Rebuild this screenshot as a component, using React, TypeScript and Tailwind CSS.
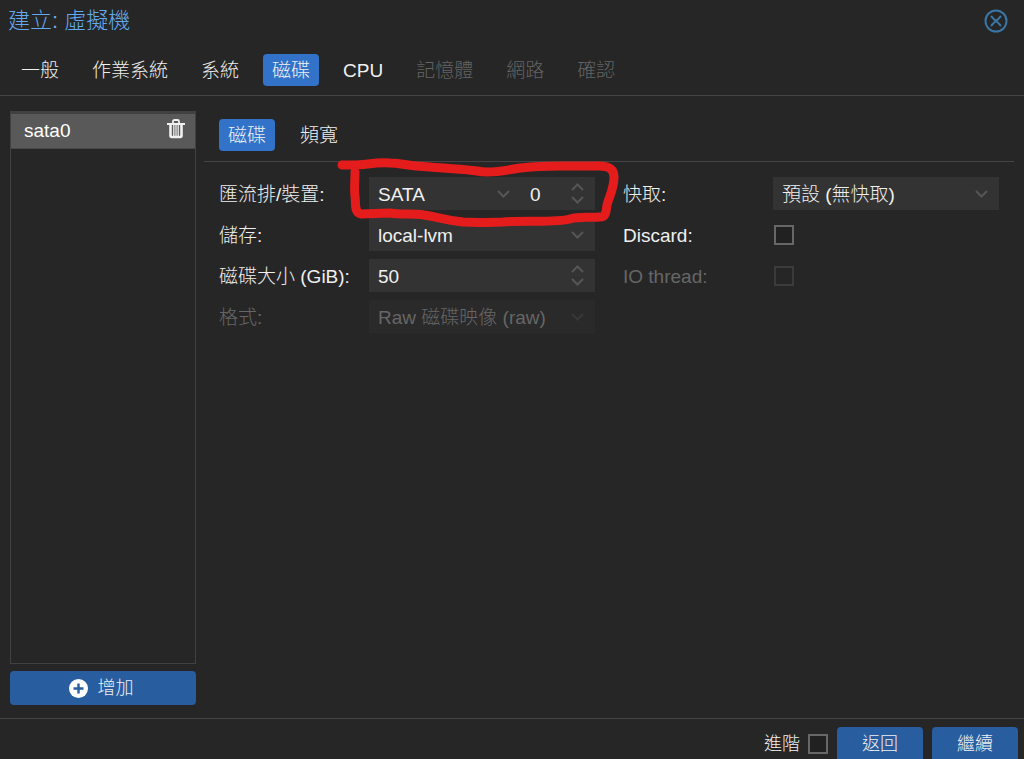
import { useState } from "react";
import type { ReactNode } from "react";

const tabs = [
  { label: "一般" },
  { label: "作業系統" },
  { label: "系統" },
  { label: "磁碟" },
  { label: "CPU" },
  { label: "記憶體", disabled: true },
  { label: "網路", disabled: true },
  { label: "確認", disabled: true },
];

const fieldText = "h-[33px] w-full min-w-0 appearance-none rounded-none bg-transparent pt-0.5 pl-[9px] outline-none";

function Tab({ label, active, disabled, onClick }: { label: string; active: boolean; disabled?: boolean; onClick: () => void }) {
  return (
    <button
      type="button"
      role="tab"
      aria-selected={active}
      disabled={disabled}
      onClick={onClick}
      className={`h-8 rounded-sm px-[9px] pt-0.5 whitespace-nowrap ${active ? "bg-[#3273c9] text-[#f0f0f0]" : "disabled:text-[#636363]"}`}
    >
      {label}
    </button>
  );
}

function Chevron({ up = false }: { up?: boolean }) {
  return (
    <svg width="13" height="8" viewBox="0 0 13 8" fill="none" stroke="currentColor" strokeWidth="2" aria-hidden="true">
      <path d={up ? "M1 7 L6.5 1.5 L12 7" : "M1 1 L6.5 6.5 L12 1"} />
    </svg>
  );
}

function TrashIcon() {
  return (
    <svg width="18" height="20" viewBox="0 0 18 20" fill="none" stroke="currentColor" aria-hidden="true">
      <path d="M6 4 V2.5 Q6 1 7.5 1 H10.5 Q12 1 12 2.5 V4" strokeWidth="1.8" />
      <path d="M0 5 H18" strokeWidth="2" />
      <path d="M3.5 5 V17 Q3.5 18 4.7 18 H13.3 Q14.5 18 14.5 17 V5" strokeWidth="2.6" />
      <path d="M6.8 6 V17 M9 6 V17 M11.2 6 V17" strokeWidth="1.3" />
    </svg>
  );
}

function PlusCircleIcon() {
  return (
    <svg width="19" height="19" viewBox="0 0 19 19" aria-hidden="true">
      <circle cx="9.5" cy="9.5" r="9.5" fill="#ffffff" />
      <path d="M9.5 4.5 V14.5 M4.5 9.5 H14.5" stroke="#285d9f" strokeWidth="2.4" />
    </svg>
  );
}

function Combo({ id, value, disabled }: { id: string; value: string; disabled?: boolean }) {
  return (
    <div className={`relative min-w-0 flex-1 ${disabled ? "bg-[#2a2a2a] text-[#666666]" : "bg-[#333333]"}`}>
      <select id={id} disabled={disabled} className={`${fieldText} block pr-8 disabled:opacity-100`}>
        <option>{value}</option>
      </select>
      <span className={`pointer-events-none absolute inset-y-0 right-[11px] flex items-center ${disabled ? "text-[#383838]" : "text-[#565656]"}`}>
        <Chevron />
      </span>
    </div>
  );
}

function Spinner({ id, initial, label, className }: { id: string; initial: number; label?: string; className: string }) {
  const [value, setValue] = useState(String(initial));
  const step = (n: number) => setValue(String(Math.max(0, (Number(value) || 0) + n)));
  return (
    <div className={`flex min-w-0 bg-[#333333] ${className}`}>
      <input id={id} aria-label={label} inputMode="numeric" value={value} onChange={(e) => setValue(e.target.value)} className={fieldText} />
      <div className="flex shrink-0 flex-col justify-center gap-[5px] pr-[11px] text-[#565656]">
        <button type="button" aria-label="+1" onClick={() => step(1)}>
          <Chevron up />
        </button>
        <button type="button" aria-label="-1" onClick={() => step(-1)}>
          <Chevron />
        </button>
      </div>
    </div>
  );
}

function Row({ id, label, dim, children }: { id: string; label: string; dim?: boolean; children: ReactNode }) {
  return (
    <div className="flex h-[33px] items-center">
      <label htmlFor={id} className={`w-[150px] shrink-0 pt-0.5 whitespace-nowrap ${dim ? "text-[#666666]" : ""}`}>
        {label}
      </label>
      {children}
    </div>
  );
}

function Checkbox({ id, disabled }: { id: string; disabled?: boolean }) {
  return (
    <input
      id={id}
      type="checkbox"
      disabled={disabled}
      className="ml-px size-5 appearance-none border-2 border-[#676767] bg-[#212121] checked:bg-[#3273c9] disabled:border-[#3b3b3b] disabled:bg-[#262626]"
    />
  );
}

function Highlight() {
  return (
    <svg
      className="pointer-events-none absolute -top-[19px] -left-[33px] z-10"
      width="284"
      height="70"
      viewBox="0 0 284 70"
      fill="none"
      stroke="#e51c1c"
      strokeWidth="9"
      strokeLinecap="round"
      strokeLinejoin="round"
      aria-hidden="true"
    >
      <path d="M6 7 H17 C30 7 38 4 54 5 C66 5 68 8 94 9 C116 11 127 11 141 13 C150 15 167 13 178 11 C194 8 210 8 227 8 H263 C274 8 278 12 278 19 C278 31 273 39 271 47 C270 56 269 59 264 59 C253 60 244 58 234 61 C220 65 188 62 167 64 C147 65 134 64 127 64 C108 62 103 59 88 57 C76 55 66 57 54 55 L25 56 C18 55 20 46 19 38 C18 31 19 24 19 14" />
    </svg>
  );
}

export default function App() {
  const [tab, setTab] = useState("磁碟");
  const [section, setSection] = useState("磁碟");

  return (
    <div className="flex min-h-screen flex-col bg-[#262626] font-['Liberation_Sans','Noto_Sans_CJK_TC',sans-serif] text-[19px] leading-6 font-light text-[#f0f0f0]">
      <header className="flex h-[42px] items-center justify-between pr-4 pl-2">
        <h1 className="text-[22px] text-[#64aaf0]">建立: 虛擬機</h1>
        <button type="button" aria-label="關閉" className="text-[#3a76a6]">
          <svg width="24" height="24" viewBox="0 0 24 24" fill="none" stroke="currentColor" strokeWidth="2" aria-hidden="true">
            <circle cx="12" cy="12" r="10.5" />
            <path d="M7 7 C9 9 10 11.5 12 11.5 S15 9 17 7 M7 17 C9 15 10 12.5 12 12.5 S15 15 17 17" />
          </svg>
        </button>
      </header>

      <nav role="tablist" className="flex gap-[15px] border-b border-[#444444] px-3 pt-3 pb-[9px]">
        {tabs.map((t) => (
          <Tab key={t.label} label={t.label} disabled={t.disabled} active={tab === t.label} onClick={() => setTab(t.label)} />
        ))}
      </nav>

      <main className="flex flex-1 gap-2 px-2.5 pt-[15px] pb-[13px]">
        <aside className="flex w-[186px] shrink-0 flex-col gap-[7px]">
          <ul className="flex-1 border border-t-[3px] border-[#414141]">
            <li className="flex h-[35px] items-center justify-between border-b border-[#484848] bg-[#595959] pr-2.5 pl-[13px] text-white">
              sata0
              <button type="button" aria-label="移除" className="pb-1 text-[#f0f0f0]">
                <TrashIcon />
              </button>
            </li>
          </ul>
          <button type="button" className="flex h-[34px] items-center justify-center gap-2.5 rounded-sm bg-[#285d9f] pr-1 text-[18px]">
            <PlusCircleIcon />
            增加
          </button>
        </aside>

        <section className="min-w-0 flex-1 pt-2">
          <div role="tablist" className="flex gap-4 border-b border-[#444444] px-[15px] pb-2.5">
            {["磁碟", "頻寬"].map((s) => (
              <Tab key={s} label={s} active={section === s} onClick={() => setSection(s)} />
            ))}
          </div>
          <form className="grid grid-cols-2 gap-7 px-[15px] pt-[15px]">
            <div className="flex min-w-0 flex-col gap-2">
              <Row id="bus" label="匯流排/裝置:">
                <div className="relative flex min-w-0 flex-1">
                  <Combo id="bus" value="SATA" />
                  <Spinner id="device" label="裝置" initial={0} className="w-[74px]" />
                  <Highlight />
                </div>
              </Row>
              <Row id="storage" label="儲存:">
                <Combo id="storage" value="local-lvm" />
              </Row>
              <Row id="size" label="磁碟大小 (GiB):">
                <Spinner id="size" initial={50} className="flex-1" />
              </Row>
              <Row id="format" label="格式:" dim>
                <Combo id="format" value="Raw 磁碟映像 (raw)" disabled />
              </Row>
            </div>
            <div className="flex min-w-0 flex-col gap-2">
              <Row id="cache" label="快取:">
                <Combo id="cache" value="預設 (無快取)" />
              </Row>
              <Row id="discard" label="Discard:">
                <Checkbox id="discard" />
              </Row>
              <Row id="iothread" label="IO thread:" dim>
                <Checkbox id="iothread" disabled />
              </Row>
            </div>
          </form>
        </section>
      </main>

      <footer className="flex justify-end gap-[9px] border-t border-[#444444] pt-2 pr-1.5 text-[18px]">
        <div className="flex items-center gap-[7px] pt-0.5">
          <label htmlFor="advanced">進階</label>
          <Checkbox id="advanced" />
        </div>
        <button type="button" className="h-8 w-[86px] rounded-t-sm bg-[#285d9f] pt-0.5">
          返回
        </button>
        <button type="button" className="h-8 w-[86px] rounded-t-sm bg-[#285d9f] pt-0.5">
          繼續
        </button>
      </footer>
    </div>
  );
}
